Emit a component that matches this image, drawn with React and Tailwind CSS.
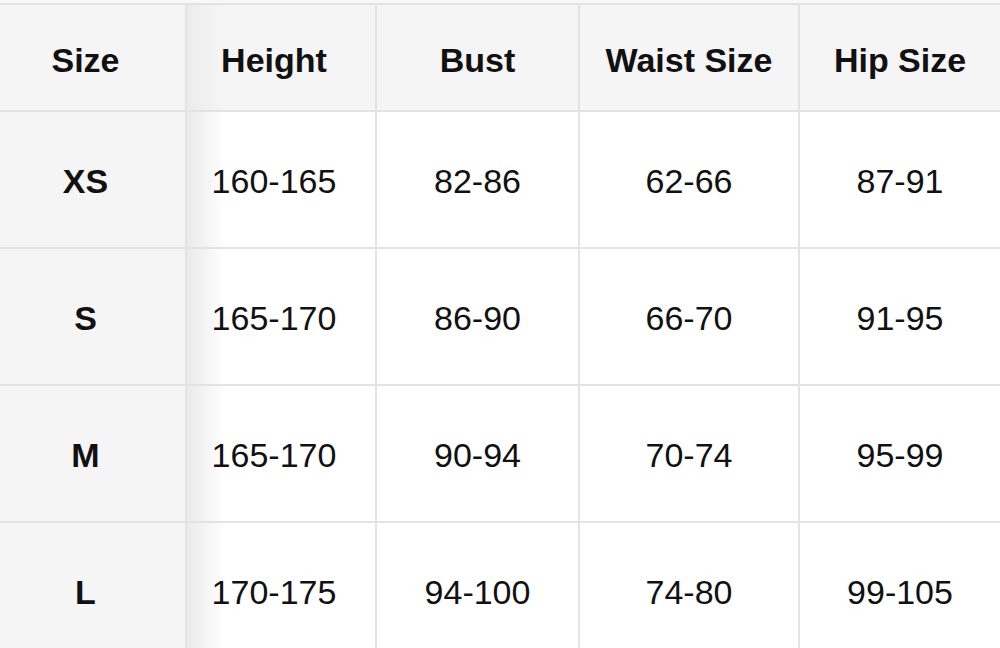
import React from 'react';

const headers = ['Size', 'Height', 'Bust', 'Waist Size', 'Hip Size'];

const rows = [
  ['XS', '160-165', '82-86', '62-66', '87-91'],
  ['S', '165-170', '86-90', '66-70', '91-95'],
  ['M', '165-170', '90-94', '70-74', '95-99'],
  ['L', '170-175', '94-100', '74-80', '99-105'],
];

// first two columns hold their text a bit left of centre
const widths = ['w-[187px] pr-[14px]', 'w-[190px] pr-[14px]', 'w-[203px]', 'w-[220px]', 'flex-1'];

export default function App() {
  return (
    <div className="w-[1000px] h-[648px] overflow-hidden bg-[#f8f8f8] pt-[3px] font-['Liberation_Sans',Arial,sans-serif] text-[#111]">
      <div className="border-t-2 border-[#e3e3e3]">
        {/* header */}
        <div className="flex h-[107px] bg-[#f5f5f5] border-b-2 border-[#e3e3e3]">
          {headers.map((h, i) => (
            <div
              key={h}
              className={`${widths[i]} flex items-center justify-center text-[34px] font-bold ${
                i < 4 ? 'border-r-2 border-[#e3e3e3]' : ''
              } ${i === 1 ? 'bg-[linear-gradient(to_right,#ececec,#f5f5f5_36px)]' : ''}`}
            >
              <span className="mt-[5px]">{h}</span>
            </div>
          ))}
        </div>

        {/* body */}
        {rows.map((r) => (
          <div key={r[0]} className="flex h-[137px] bg-white border-b-2 border-[#e3e3e3]">
            {r.map((c, i) => (
              <div
                key={i}
                className={`${widths[i]} flex items-center justify-center text-[34px] ${
                  i < 4 ? 'border-r-2 border-[#e3e3e3]' : ''
                } ${i === 0 ? 'bg-[#f5f5f5] font-bold' : ''} ${
                  i === 1 ? 'bg-[linear-gradient(to_right,#eaeaea,#ffffff_38px)]' : ''
                }`}
              >
                <span className="mt-[3px]">{c}</span>
              </div>
            ))}
          </div>
        ))}
      </div>
    </div>
  );
}
